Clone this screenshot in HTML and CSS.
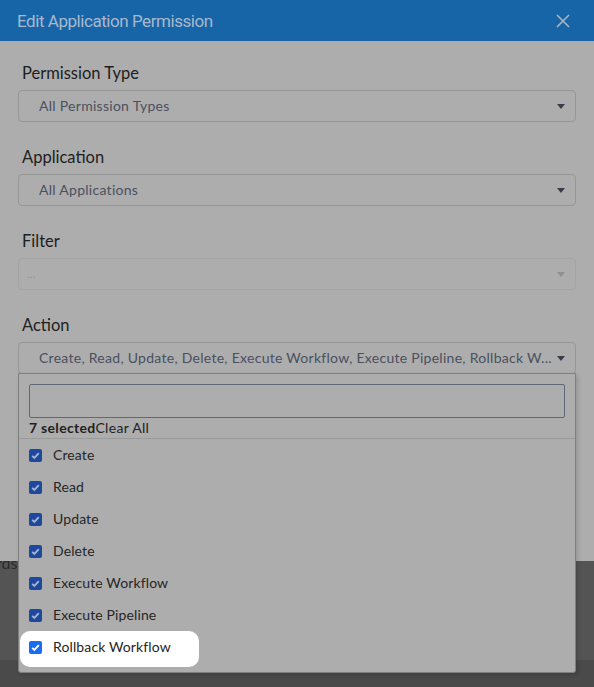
FILE: index.html
```html
<!DOCTYPE html>
<html>
<head>
<meta charset="utf-8">
<link rel="stylesheet" href="styles.css">
</head>
<body>
<div class="page">
  <div class="modal">
    <div class="modal-header">
      <span class="modal-title">Edit Application Permission</span>
      <svg class="close" width="14" height="14" viewBox="0 0 14 14"><path d="M1 1L13 13M13 1L1 13" stroke="#a9b6c6" stroke-width="1.6" fill="none"/></svg>
    </div>
    <div class="modal-body">
      <div class="field">
        <div class="label">Permission Type</div>
        <div class="select"><span class="value">All Permission Types</span><span class="caret"></span></div>
      </div>
      <div class="field">
        <div class="label">Application</div>
        <div class="select"><span class="value">All Applications</span><span class="caret"></span></div>
      </div>
      <div class="field">
        <div class="label">Filter</div>
        <div class="select disabled"><span class="value">...</span><span class="caret"></span></div>
      </div>
      <div class="field action">
        <div class="label">Action</div>
        <div class="select"><span class="value">Create, Read, Update, Delete, Execute Workflow, Execute Pipeline, Rollback W...</span><span class="caret"></span></div>
        <div class="menu">
          <div class="search"></div>
          <div class="summary"><b>7 selected</b>Clear All</div>
          <div class="options">
            <div class="option"><span class="cb"><svg viewBox="0 0 13 13"><path d="M3.2 6.8L5.4 9L9.8 4.2" stroke="#a8b3c9" stroke-width="1.9" fill="none"/></svg></span>Create</div>
            <div class="option"><span class="cb"><svg viewBox="0 0 13 13"><path d="M3.2 6.8L5.4 9L9.8 4.2" stroke="#a8b3c9" stroke-width="1.9" fill="none"/></svg></span>Read</div>
            <div class="option"><span class="cb"><svg viewBox="0 0 13 13"><path d="M3.2 6.8L5.4 9L9.8 4.2" stroke="#a8b3c9" stroke-width="1.9" fill="none"/></svg></span>Update</div>
            <div class="option"><span class="cb"><svg viewBox="0 0 13 13"><path d="M3.2 6.8L5.4 9L9.8 4.2" stroke="#a8b3c9" stroke-width="1.9" fill="none"/></svg></span>Delete</div>
            <div class="option"><span class="cb"><svg viewBox="0 0 13 13"><path d="M3.2 6.8L5.4 9L9.8 4.2" stroke="#a8b3c9" stroke-width="1.9" fill="none"/></svg></span>Execute Workflow</div>
            <div class="option"><span class="cb"><svg viewBox="0 0 13 13"><path d="M3.2 6.8L5.4 9L9.8 4.2" stroke="#a8b3c9" stroke-width="1.9" fill="none"/></svg></span>Execute Pipeline</div>
            <div class="option last"><span class="spot"><span class="cb on"><svg viewBox="0 0 13 13"><path d="M3.2 6.8L5.4 9L9.8 4.2" stroke="#ffffff" stroke-width="1.9" fill="none"/></svg></span>Rollback Workflow</span></div>
          </div>
        </div>
      </div>
    </div>
  </div>
  <div class="behind"><span class="behind-text">rds</span></div>
  <div class="behind-bottom"></div>
</div>
</body>
</html>
```
FILE: styles.css
```css
* { box-sizing: border-box; }
html, body { margin: 0; padding: 0; }
body {
  width: 594px;
  height: 687px;
  overflow: hidden;
  background: #4a4a4a;
  font-family: "Lato", "Open Sans", sans-serif;
}
.page { display: flex; flex-direction: column; height: 687px; }
.modal { height: 561px; background: #adadad; position: relative; z-index: 2; }
.modal-header {
  height: 41px;
  background: #1765a7;
  display: flex;
  align-items: center;
  justify-content: space-between;
  padding: 0 17px 0 17px;
}
.modal-title {
  font-family: "Roboto", sans-serif;
  font-size: 17px;
  color: #a9b8cc;
  letter-spacing: -0.45px;
}
.close { display: block; margin-right: 7px; }
.modal-body { padding: 21px 18px 0 18px; }
.field { margin-bottom: 24px; }
.field.action { position: relative; margin-bottom: 0; }
.label {
  font-size: 16.5px;
  line-height: 20px;
  color: #1e1e1e;
  padding: 1px 0 0 4px;
  margin-bottom: 7px;
}
.select {
  height: 32px;
  border: 1px solid #969696;
  border-radius: 4px;
  display: flex;
  align-items: center;
  padding: 0 10px 0 20px;
}
.select .value {
  flex: 1;
  font-size: 14px;
  letter-spacing: 0.28px;
  line-height: 18px;
  color: #4a5060;
  white-space: nowrap;
  overflow: hidden;
  margin-top: -1px;
}
.select.disabled { border-color: #a4a4a4; padding-left: 8px; }
.select.disabled .value { color: #969696; font-size: 12px; letter-spacing: 0; }
.select.disabled .caret { border-top-color: #8f8f8f; }
.caret {
  width: 0; height: 0;
  border-left: 4px solid transparent;
  border-right: 4px solid transparent;
  border-top: 5px solid #383d4b;
  margin-left: 6px;
}
.menu {
  position: absolute;
  top: 59px;
  left: 0;
  width: 558px;
  height: 300px;
  border: 1px solid #7f7f7f;
  border-radius: 0 0 3px 3px;
  background: #adadad;
  box-shadow: 2px 2px 4px rgba(0,0,0,0.15);
  padding: 10px 0 0 0;
}
.search {
  height: 34px;
  margin: 0 10px;
  border: 1px solid #5f6779;
  border-radius: 2px;
}
.summary {
  font-size: 14px;
  letter-spacing: 0.3px;
  line-height: 20px;
  color: #1f1f1f;
  padding: 0 10px 0 10px;
  height: 21px;
  border-bottom: 1px solid #9a9a9a;
}
.summary b { font-weight: 700; }
.option {
  height: 32px;
  display: flex;
  align-items: center;
  padding-left: 10px;
  font-size: 14px;
  letter-spacing: 0.12px;
  line-height: 18px;
  color: #262626;
}
.option.last { align-items: flex-start; }
.cb {
  width: 13px; height: 13px;
  border-radius: 2px;
  background: #1d48a2;
  margin-right: 11px;
  display: inline-block;
}
.cb svg { display: block; width: 13px; height: 13px; }
.cb.on { background: #1a6cf0; }
.spot {
  display: inline-flex;
  align-items: center;
  background: #ffffff;
  border-radius: 10px;
  height: 36px;
  margin-left: -9px;
  padding: 0 28px 4px 9px;
  color: #262626;
}
.behind {
  height: 99px;
  background: #545454;
  position: relative;
}
.behind-text {
  position: absolute;
  left: -4px;
  top: -8px;
  font-size: 16px;
  color: #2a2a2a;
}
.behind-bottom { flex: 1; background: #4a4a4a; }
```
